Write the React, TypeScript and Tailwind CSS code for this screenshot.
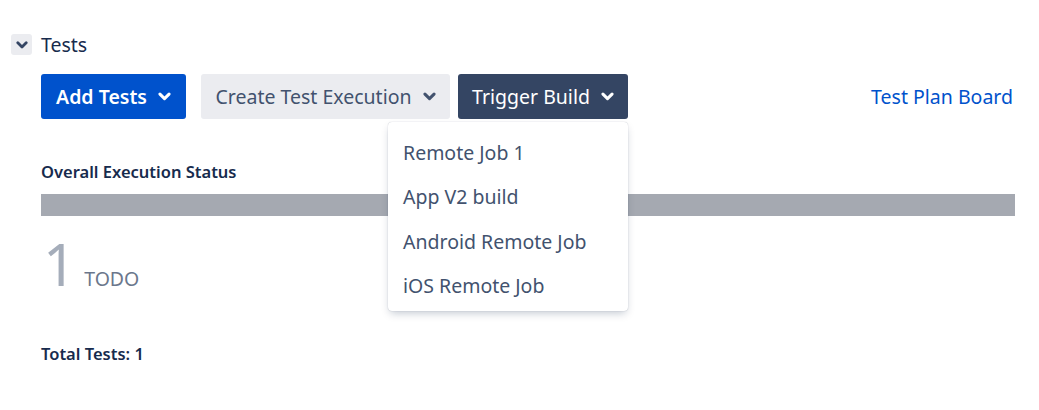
const jobs = ['Remote Job 1', 'App V2 build', 'Android Remote Job', 'iOS Remote Job']

function Caret({ className }: { className?: string }) {
  return (
    <svg viewBox="0 0 12 8" className={className} fill="none" stroke="currentColor" strokeWidth="2.8" strokeLinecap="round" strokeLinejoin="round">
      <path d="M1.8 1.8 L6 6 L10.2 1.8" />
    </svg>
  )
}

export default function App() {
  return (
    <div className="relative w-[1039px] h-[410px] bg-white text-[#172b4d] font-['Noto_Sans',sans-serif]">
      <div className="pl-[11px] pr-[24px] pt-[34px]">
        <div className="flex items-center gap-[9px] h-[21px]">
          <span className="w-[21px] h-[21px] rounded-[3px] bg-[#ebecf0] flex items-center justify-center text-[#344563]">
            <Caret className="w-[12px] h-[8px]" />
          </span>
          <span className="text-[19.5px] leading-none">Tests</span>
        </div>

        <div className="pl-[30px]">
          <div className="mt-[19px] flex items-center">
            <button className="h-[45px] w-[145px] rounded-[3px] bg-[#0052cc] text-white text-[19.5px] font-semibold flex items-center justify-center gap-[11px]">
              Add Tests
              <Caret className="w-[13px] h-[9px]" />
            </button>
            <button className="ml-[15px] h-[45px] w-[249px] rounded-[3px] bg-[#ebecf0] text-[#42526e] text-[19.5px] flex items-center justify-center gap-[11px]">
              Create Test Execution
              <Caret className="w-[13px] h-[9px]" />
            </button>
            <div className="relative ml-[8px]">
              <button className="h-[45px] w-[170px] rounded-[3px] bg-[#344563] text-white text-[19.5px] flex items-center justify-center gap-[11px]">
                Trigger Build
                <Caret className="w-[13px] h-[9px]" />
              </button>
              <div className="absolute right-0 top-[48px] w-[240px] rounded-[4px] bg-white pt-[8px] pb-[3px] shadow-[0_4px_8px_-2px_rgba(9,30,66,0.25),0_0_1px_rgba(9,30,66,0.31)] z-10">
                {jobs.map((job) => (
                  <div key={job} className="h-[44.5px] px-[15px] flex items-center text-[19.5px] text-[#42526e]">
                    {job}
                  </div>
                ))}
              </div>
            </div>
            <a className="ml-auto mr-[2px] text-[19.5px] text-[#0052cc]">Test Plan Board</a>
          </div>

          <div className="mt-[45px] text-[16.5px] font-semibold leading-none">Overall Execution Status</div>
          <div className="mt-[13px] h-[22px] bg-[#a5a9b1]" />

          <div className="mt-[19px] flex items-baseline">
            <span className="ml-[2px] text-[58px] font-normal leading-none text-[#a5adba]">1</span>
            <span className="ml-[8px] text-[19.5px] leading-none text-[#6b778c]">TODO</span>
          </div>

          <div className="mt-[53px] text-[16.5px] font-semibold leading-none">Total Tests: 1</div>
        </div>
      </div>
    </div>
  )
}
